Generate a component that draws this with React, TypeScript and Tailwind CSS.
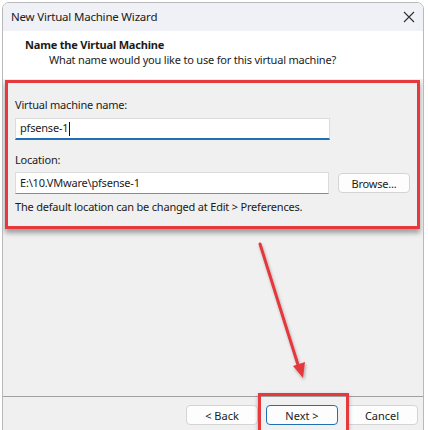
const font = { fontFamily: '"Noto Sans", "Open Sans", sans-serif' };

function WinButton({ label, primary }: { label: string; primary?: boolean }) {
  return (
    <button
      className={`w-[72px] h-[20px] rounded-[4px] bg-[#fdfdfd] text-[11px] text-[#1b1b1b] leading-none flex items-center justify-center border ${
        primary ? 'border-[#1f6fb5]' : 'border-[#d4d4d4]'
      }`}
    >
      {label}
    </button>
  );
}

export default function App() {
  return (
    <div className="relative w-[428px] h-[430px] bg-white overflow-hidden text-[#1b1b1b]" style={font}>
      {/* Dialog window */}
      <div className="ml-[2px] mt-[2px] w-[422px] h-[440px] border border-[#b9b9b9] rounded-t-[7px] flex flex-col overflow-hidden">
        {/* Title bar */}
        <div className="h-[28px] bg-[#eff1f6] flex items-center justify-between pl-[8px] pr-[8px] shrink-0">
          <span className="text-[11.5px] tracking-[-0.2px] text-[#202020]">New Virtual Machine Wizard</span>
          <svg className="w-[12px] h-[12px]" viewBox="0 0 12 12" fill="none" stroke="#303030" strokeWidth={1.1}>
            <path d="M1 1l10 10M11 1L1 11" />
          </svg>
        </div>

        {/* Page header */}
        <div className="h-[48px] bg-white shrink-0 pl-[22px] pt-[6px] text-[11px] tracking-[-0.2px]">
          <div className="font-bold leading-[16px]">Name the Virtual Machine</div>
          <div className="leading-[16px] pl-[24px] mt-[-1px]">
            What name would you like to use for this virtual machine?
          </div>
        </div>

        {/* Body */}
        <div className="flex-1 bg-[#f0f0f0] flex flex-col">
          <div className="mt-[1px] ml-[2px] mr-[3px] h-[149px] border-[3px] border-[#e5393e] shadow-[0_4px_5px_rgba(0,0,0,0.35)] px-[7px] pt-[14px] text-[11px] tracking-[-0.2px]">
            <div className="leading-[16px]">Virtual machine name:</div>
            <div className="mt-[5px] w-[315px] h-[22px] bg-white border border-[#dcdcdc] border-b-2 border-b-[#1f6fb5] flex items-center pl-[4px] text-[11px]">
              pfsense-1<span className="w-px h-[14px] bg-[#111] ml-px" />
            </div>
            <div className="mt-[12px] leading-[16px]">Location:</div>
            <div className="mt-[4px] flex items-center gap-[9px]">
              <div className="w-[315px] h-[22px] bg-white border border-[#dcdcdc] border-b-[#8a8a8a] flex items-center pl-[4px] text-[11px]">
                E:\10.VMware\pfsense-1
              </div>
              <WinButton label="Browse..." />
            </div>
            <div className="mt-[5px] leading-[16px]">
              The default location can be changed at Edit &gt; Preferences.
            </div>
          </div>

          <div className="flex-1" />

          {/* Footer buttons */}
          <div className="h-[45px] border-t border-[#a0a0a0] flex justify-end items-start pt-[8px] pr-[5px] gap-[8px] shrink-0">
            <WinButton label="< Back" />
            <WinButton label="Next >" primary />
            <WinButton label="Cancel" />
          </div>
        </div>
      </div>

      {/* Callout around Next */}
      <div className="absolute left-[258px] top-[393px] w-[91px] h-[45px] border-[3px] border-[#e5393e] shadow-[0_2px_4px_rgba(0,0,0,0.3)]" />

      {/* Callout arrow */}
      <svg className="absolute left-0 top-0 w-[428px] h-[430px] pointer-events-none" viewBox="0 0 428 430">
        <defs>
          <filter id="sh" x="-20%" y="-20%" width="140%" height="140%">
            <feDropShadow dx="1" dy="2" stdDeviation="1.5" floodColor="#000" floodOpacity="0.3" />
          </filter>
        </defs>
        <g filter="url(#sh)">
          <line x1="260" y1="244" x2="299" y2="368" stroke="#e5393e" strokeWidth={3} strokeLinecap="round" />
          <polygon points="303,378 293,366 305,362" fill="#e5393e" />
        </g>
      </svg>
    </div>
  );
}
